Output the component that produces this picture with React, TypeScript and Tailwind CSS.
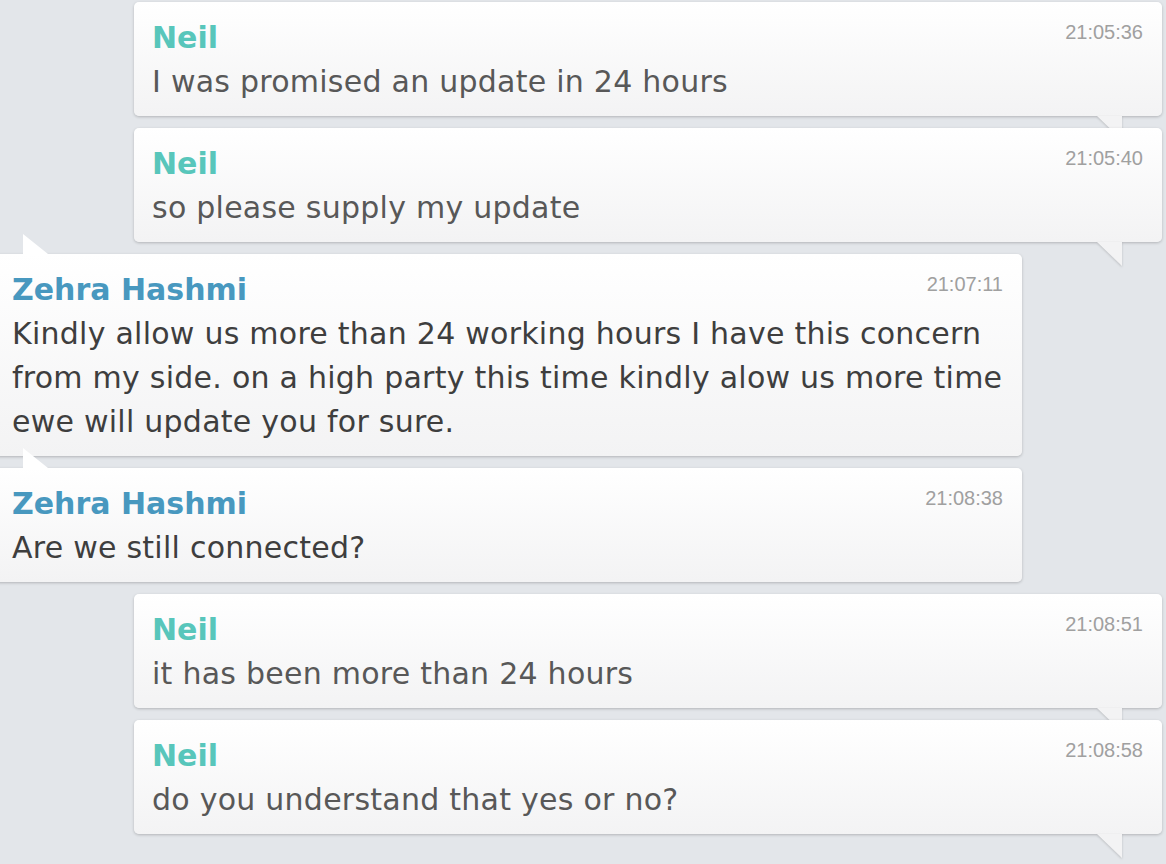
import React from 'react';

type Message = {
  from: 'neil' | 'agent';
  name: string;
  time: string;
  text: string;
};

const messages: Message[] = [
  { from: 'neil', name: 'Neil', time: '21:05:36', text: 'I was promised an update in 24 hours' },
  { from: 'neil', name: 'Neil', time: '21:05:40', text: 'so please supply my update' },
  {
    from: 'agent',
    name: 'Zehra Hashmi',
    time: '21:07:11',
    text: 'Kindly allow us more than 24 working hours I have this concern from my side. on a high party this time kindly alow us more time ewe will update you for sure.',
  },
  { from: 'agent', name: 'Zehra Hashmi', time: '21:08:38', text: 'Are we still connected?' },
  { from: 'neil', name: 'Neil', time: '21:08:51', text: 'it has been more than 24 hours' },
  { from: 'neil', name: 'Neil', time: '21:08:58', text: 'do you understand that yes or no?' },
];

// little speech tails
const TailDown = () => (
  <svg
    className="absolute right-[40px] top-full w-[25px] h-[24px] drop-shadow-[0_1px_1px_rgba(0,0,0,0.18)]"
    viewBox="0 0 25 24"
  >
    <polygon points="0,0 25,0 25,24" fill="#f3f3f4" />
  </svg>
);

const TailUp = () => (
  <svg className="absolute left-[29px] bottom-full w-[25px] h-[20px]" viewBox="0 0 25 20">
    <polygon points="0,0 0,20 25,20" fill="#ffffff" />
  </svg>
);

const Bubble: React.FC<{ msg: Message }> = ({ msg }) => {
  const isNeil = msg.from === 'neil';
  return (
    <div
      className={`relative w-[1028px] rounded-[5px] bg-gradient-to-b from-white to-[#f3f3f4] shadow-[0_1px_3px_rgba(0,0,0,0.22)] pt-[16px] pb-[12px] px-[18px] ${
        isNeil ? 'ml-[134px]' : 'ml-[-6px]'
      }`}
    >
      {isNeil ? <TailDown /> : <TailUp />}
      <div className="flex items-start justify-between">
        <div
          className={`font-bold text-[30px] leading-[40px] ${isNeil ? 'text-[#58c6bb]' : 'text-[#4898bf]'}`}
          style={{ fontFamily: '"DejaVu Sans", Verdana, sans-serif' }}
        >
          {msg.name}
        </div>
        <div
          className="mt-[4px] mr-[1px] text-[20px] leading-[20px] text-[#a0a0a0]"
          style={{ fontFamily: '"Liberation Sans", Arial, sans-serif' }}
        >
          {msg.time}
        </div>
      </div>
      <div
        className={`mt-[2px] text-[30px] leading-[44px] tracking-[0.25px] ${isNeil ? 'text-[#585858]' : 'text-[#3e3e3e]'}`}
        style={{ fontFamily: '"DejaVu Sans", Verdana, sans-serif' }}
      >
        {msg.text}
      </div>
    </div>
  );
};

export default function App() {
  return (
    <div className="w-[1166px] h-[864px] overflow-hidden bg-[#e3e6ea] pt-[2px]">
      <div className="flex flex-col gap-[12px]">
        {messages.map((m, i) => (
          <Bubble key={i} msg={m} />
        ))}
      </div>
    </div>
  );
}
